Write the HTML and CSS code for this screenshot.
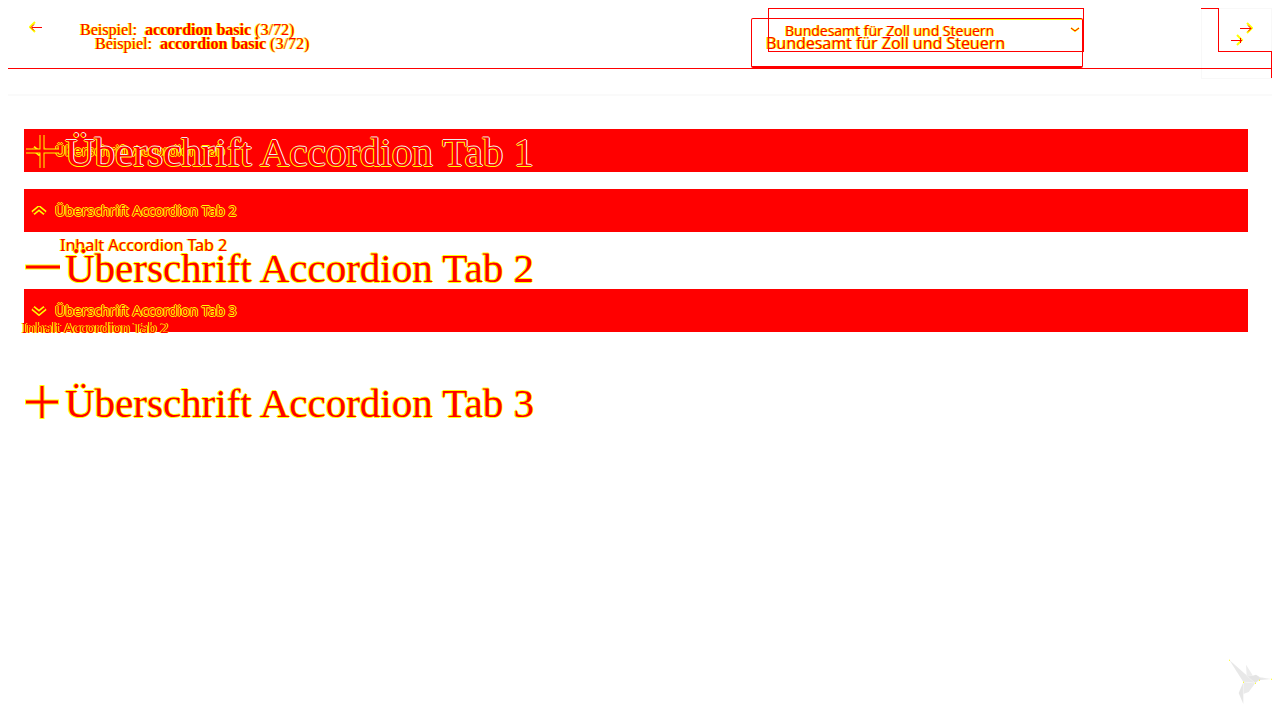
FILE: index.html
```html
<!DOCTYPE html>
<html lang="de">
<head>
<meta charset="utf-8">
<title>accordion basic</title>
<link rel="stylesheet" href="styles.css">
</head>
<body>
<main class="stage">
  <section class="layer before">
    <header class="bar">
      <a class="nav" href="#prev" aria-label="Zurück"><svg class="arrow" viewBox="0 0 14 12"><path class="halo" d="M6 1L1 6L6 11"/><path class="ink" d="M13 6.5H3M5 3.500L2 6.500L5 9.500"/></svg></a>
      <p class="title">Beispiel:&nbsp; <b>accordion basic</b> (3/72)</p>
      <div class="picker">
        <select class="select" aria-label="Thema"><option>Bundesamt für Zoll und Steuern</option></select>
        <svg class="caret" viewBox="0 0 10 6"><path class="halo" d="M1 1L5 4L9 1"/><path class="ink" d="M1 1L5 4L9 1"/></svg>
      </div>
      <a class="nav next" href="#next" aria-label="Weiter"><svg class="arrow" viewBox="0 0 14 12"><path class="halo" d="M8 1L13 6L8 11"/><path class="ink" d="M1 6.500H12M9 3.500L12 6.500L9 9.500"/></svg></a>
    </header>
    <div class="accordion">
      <button class="tab"><svg class="chevron" viewBox="0 0 16 10"><path class="edge" d="M2 2L8 7L14 2"/><path class="core" d="M2 2L8 7L14 2"/></svg>Überschrift Accordion Tab 1</button>
      <button class="tab"><svg class="chevron" viewBox="0 0 16 10"><path class="edge" d="M2 7L8 2L14 7"/><path class="core" d="M2 7L8 2L14 7"/></svg>Überschrift Accordion Tab 2</button>
      <p class="content">Inhalt Accordion Tab 2</p>
      <button class="tab"><svg class="chevron" viewBox="0 0 16 10"><path class="edge" d="M2 2L8 7L14 2"/><path class="core" d="M2 2L8 7L14 2"/></svg>Überschrift Accordion Tab 3</button>
    </div>
  </section>
  <section class="layer after">
    <header class="bar">
      <p class="title">Beispiel:&nbsp; <b>accordion basic</b> (3/72)</p>
      <select class="select" aria-label="Thema"><option>Bundesamt für Zoll und Steuern</option></select>
      <a class="nav next" href="#next" aria-label="Weiter"><svg class="arrow" viewBox="0 0 14 12"><path class="halo" d="M7 1L12 6L7 11"/><path class="ink" d="M1 6.500H12M10.500 4V9"/></svg></a>
    </header>
    <div class="accordion">
      <button class="heading outlined"><svg class="sign" viewBox="0 0 36 36"><path class="edge" d="M2 17H35M18 1V34"/><path class="core" d="M2 17H35M18 1V34"/></svg>Überschrift Accordion Tab 1</button>
      <button class="heading open"><svg class="sign" viewBox="0 0 36 36"><path class="edge" d="M1 17H36"/><path class="core" d="M2 17H36"/></svg>Überschrift Accordion Tab 2</button>
      <p class="content">Inhalt Accordion Tab 2</p>
      <button class="heading"><svg class="sign" viewBox="0 0 36 36"><path class="edge" d="M1 17H35M18 0V34"/><path class="core" d="M2 17H34M18 1V33"/></svg>Überschrift Accordion Tab 3</button>
    </div>
  </section>
</main>
<svg class="bird" viewBox="54 61 135 138">
  <path fill="#e8e8e8" d="M58 64L136 133L100 130Z"/>
  <path fill="#ececec" d="M108 78L129 111L110 112Z"/>
  <path fill="#e4e4e4" d="M110 113L125 112L138 108L150 116L184 121L148 124L136 133Z"/>
  <path fill="#eaeaea" d="M100 130L136 133L116 160L100 166Z"/>
  <path fill="#e6e6e6" d="M100 131V196L86 163Z"/>
  <path stroke="#fff" fill="none" d="M100 130L136 133L110 112M100 130V166M148 117L184 121"/>
  <path fill="#ff0" d="M57 63h3v3h-3zM99 129h3v3h-3zM135 132h3v3h-3zM147 123h3v3h-3zM183 120h3v3h-3z"/>
</svg>
</body>
</html>
```
FILE: styles.css
```css
* { box-sizing: border-box; }
body { margin: 8px; background: #fff; color: #f00; font: 16px/20px "Liberation Serif", serif; }
p { margin: 0; }
.stage { display: grid; }
.layer { grid-area: 1 / 1; min-width: 0; }
.after { pointer-events: none; }
.bar { display: flex; align-items: flex-start; }
.title { flex: 1; text-shadow: 1px 0 #ff0, -1px 0 #ff0; }
.nav { display: block; flex: none; }
.arrow { display: block; width: 14px; height: 12px; }
.halo, .ink, .edge, .core { fill: none; }
.halo { stroke: #ff0; stroke-width: 2; }
.ink { stroke: #f00; stroke-width: 1; }
.edge { stroke: #ff0; stroke-width: 5; }
.core { stroke: #f00; stroke-width: 3; }
.select { appearance: none; background: transparent; color: #f00; border: 1px solid #f00; border-radius: 0; margin: 0; font-family: "Open Sans", sans-serif; text-shadow: 1px 0 #ff0, -1px 0 #ff0; }
.content { font-family: "Noto Sans", sans-serif; text-shadow: 1px 0 #ff0, -1px 0 #ff0; }

.before .bar { height: 88px; border-bottom: 2px solid #fafafa; }
.before .nav { padding: 13px 21px; }
.before .title { padding: 12px 16px; }
.picker { display: grid; align-items: center; width: 316px; margin-right: 117px; }
.before .select { grid-area: 1 / 1; height: 44px; padding: 0 16px; font-size: 14px; }
.caret { grid-area: 1 / 1; justify-self: end; width: 10px; height: 6px; margin-right: 4px; }
.before .next { width: 71px; height: 71px; padding: 13px 0 0 37px; border: 1px solid #f8f8f8; }
.before .accordion { display: flex; flex-direction: column; gap: 17px; padding: 33px 24px 0 16px; }
.tab { display: flex; align-items: center; gap: 8px; height: 43px; border: 0; background: #f00; color: #f00; padding: 0 7px; font: 14px "Noto Sans", sans-serif; text-shadow: 1px 0 #ff0, -1px 0 #ff0, 0 1px #ff0, 0 -1px #ff0; text-align: left; }
.chevron { width: 16px; height: 10px; }
.chevron .edge { stroke-width: 5; }
.chevron .core { stroke-width: 2; }
.before .content { margin: -14px 0 -3px; padding: 0 36px; height: 40px; font-size: 16px; line-height: 20px; }

.after .bar { height: 61px; border-bottom: 1px solid #f00; }
.after .title { padding: 26px 0 0 87px; }
.after .select { width: 332px; height: 50px; margin: 10px 118px 0 0; padding: 0 14px; border-width: 1px 1px 2px; border-radius: 2px; font-size: 16px; background: linear-gradient(#ff0, #ff0) 100% 0 / 132px 1px no-repeat; }
.after .next { width: 71px; height: 70px; padding: 26px 0 0 29px; background: linear-gradient(#f00, #f00) 0 0 / 17px 1px no-repeat, linear-gradient(#f00, #f00) 17px 0 / 1px 44px no-repeat, linear-gradient(#f00, #f00) 17px 43px / 54px 1px no-repeat, linear-gradient(#f00, #f00) 70px 43px / 1px 27px no-repeat; }
.after .accordion { display: flex; flex-direction: column; padding: 59px 16px 0; }
.heading { display: flex; align-items: center; gap: 5px; height: 48px; border: 0; background: none; padding: 0; color: #f00; font: 41px/48px "Liberation Serif", serif; text-align: left; text-shadow: 1px 0 #ff0, -1px 0 #ff0, 0 1px #ff0, 0 -1px #ff0; }
.sign { width: 36px; height: 36px; }
.outlined { text-shadow: 1px 0 #fff, -1px 0 #ff0, 0 -1px #eee, 0 1px #ff0; }
.open { margin-top: 68px; }
.after .content { margin: 26px 0 41px -2px; font-size: 14px; line-height: 20px; }

.bird { position: fixed; right: 7px; bottom: 15px; width: 45px; height: 46px; }
```
